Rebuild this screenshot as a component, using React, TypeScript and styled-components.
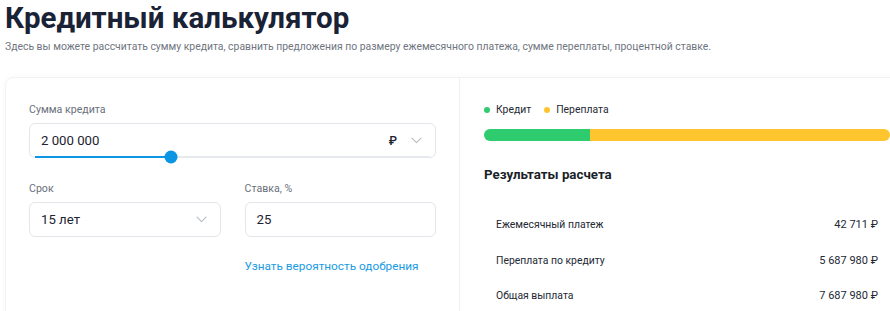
import styled, { createGlobalStyle } from 'styled-components'

const GlobalStyle = createGlobalStyle`
  html, body {
    margin: 0;
    padding: 0;
    background: #ffffff;
    overflow: hidden;
  }
  body {
    font-family: Roboto, 'Liberation Sans', sans-serif;
    color: #1f2430;
  }
`

const Chevron = () => (
  <svg width="11" height="7" viewBox="0 0 11 7" fill="none">
    <path d="M1 1.2L5.5 5.7L10 1.2" stroke="#b9bec6" strokeWidth="1.2" strokeLinecap="round" strokeLinejoin="round" />
  </svg>
)

const results = [
  { label: 'Ежемесячный платеж', value: '42 711 ₽' },
  { label: 'Переплата по кредиту', value: '5 687 980 ₽' },
  { label: 'Общая выплата', value: '7 687 980 ₽' },
]

const App = () => {
  const creditShare = 2000000 / 7687980

  return (
    <Page>
      <GlobalStyle />
      <Title>Кредитный калькулятор</Title>
      <Subtitle>
        Здесь вы можете рассчитать сумму кредита, сравнить предложения по размеру ежемесячного
        платежа, сумме переплаты, процентной ставке.
      </Subtitle>

      <Card>
        <Form>
          <Field>
            <Label>Сумма кредита</Label>
            <InputBox>
              <Value>2 000 000</Value>
              <Suffix>
                <Currency>₽</Currency>
                <Chevron />
              </Suffix>
              <Slider>
                <SliderFill style={{ width: '34.5%' }} />
                <Thumb style={{ left: '34.5%' }} />
              </Slider>
            </InputBox>
          </Field>

          <Row>
            <Field>
              <Label>Срок</Label>
              <InputBox>
                <Value>15 лет</Value>
                <Suffix>
                  <Chevron />
                </Suffix>
              </InputBox>
            </Field>
            <Field>
              <Label>Ставка, %</Label>
              <InputBox>
                <Value>25</Value>
              </InputBox>
              <Link>Узнать вероятность одобрения</Link>
            </Field>
          </Row>
        </Form>

        <Results>
          <Legend>
            <LegendItem>
              <Dot $color="#2ecb6f" />
              Кредит
            </LegendItem>
            <LegendItem>
              <Dot $color="#ffc52e" />
              Переплата
            </LegendItem>
          </Legend>
          <Bar>
            <BarPart $color="#2ecb6f" style={{ width: `${creditShare * 100}%` }} />
            <BarPart $color="#ffc52e" style={{ flex: 1 }} />
          </Bar>

          <ResultsTitle>Результаты расчета</ResultsTitle>

          <ResultList>
            {results.map((r) => (
              <ResultRow key={r.label}>
                <span>{r.label}</span>
                <ResultValue>{r.value}</ResultValue>
              </ResultRow>
            ))}
          </ResultList>
        </Results>
      </Card>
    </Page>
  )
}

const Page = styled.div`
  padding: 2px 0 0 5px;
  width: 920px;
`

const Title = styled.h1`
  margin: 0;
  font-size: 29.5px;
  line-height: 32px;
  font-weight: 700;
  color: #1a2236;
`

const Subtitle = styled.p`
  margin: 4px 0 0;
  font-size: 10.4px;
  line-height: 18px;
  color: #6f7580;
`

const Card = styled.div`
  margin-top: 21px;
  display: grid;
  grid-template-columns: 454px 454px;
  border: 1px solid #f1f2f4;
  border-radius: 8px;
  min-height: 260px;
  box-shadow: 0 0 6px rgba(20, 30, 50, 0.03);
`

const Form = styled.div`
  padding: 23px 23px 0 23px;
  border-right: 1px solid #eef0f2;
  display: flex;
  flex-direction: column;
  gap: 22px;
`

const Row = styled.div`
  display: grid;
  grid-template-columns: 1fr 1fr;
  gap: 24px;
`

const Field = styled.div`
  display: flex;
  flex-direction: column;
`

const Label = styled.div`
  font-size: 10.6px;
  line-height: 18px;
  color: #6a707c;
  margin-bottom: 4px;
`

const InputBox = styled.div`
  position: relative;
  height: 35px;
  box-sizing: border-box;
  border: 1px solid #e3e6ea;
  border-radius: 6px;
  display: flex;
  align-items: center;
  justify-content: space-between;
  padding: 0 13px 0 11px;
`

const Value = styled.span`
  font-size: 13.2px;
  color: #1d2330;
`

const Suffix = styled.span`
  display: flex;
  align-items: center;
  gap: 14px;
`

const Currency = styled.span`
  font-size: 12px;
  font-weight: 500;
  color: #1d2330;
`

const Slider = styled.div`
  position: absolute;
  left: 5px;
  right: 5px;
  bottom: -1px;
  height: 2px;
  background: #e6e9ed;
`

const SliderFill = styled.div`
  height: 100%;
  background: #0b95e3;
`

const Thumb = styled.div`
  position: absolute;
  top: 1px;
  width: 13px;
  height: 13px;
  border-radius: 50%;
  background: #0b95e3;
  transform: translate(-50%, -50%);
`

const Link = styled.a`
  margin-top: 21px;
  font-size: 11.8px;
  line-height: 16px;
  color: #1a9be3;
  cursor: pointer;
`

const Results = styled.div`
  padding: 23px 24px 0 24px;
  display: flex;
  flex-direction: column;
`

const Legend = styled.div`
  display: flex;
  gap: 13px;
  font-size: 10.4px;
  line-height: 18px;
  color: #232833;
`

const LegendItem = styled.span`
  display: flex;
  align-items: center;
  gap: 6px;
`

const Dot = styled.span<{ $color: string }>`
  width: 6px;
  height: 6px;
  border-radius: 50%;
  background: ${(p) => p.$color};
`

const Bar = styled.div`
  margin-top: 10px;
  display: flex;
  height: 12px;
  border-radius: 6px;
  overflow: hidden;
`

const BarPart = styled.div<{ $color: string }>`
  background: ${(p) => p.$color};
`

const ResultsTitle = styled.div`
  margin-top: 24px;
  font-size: 13.3px;
  line-height: 20px;
  font-weight: 700;
  color: #1a1f2a;
`

const ResultList = styled.div`
  margin-top: 22px;
  display: flex;
  flex-direction: column;
`

const ResultRow = styled.div`
  display: flex;
  justify-content: space-between;
  align-items: center;
  height: 35.5px;
  padding: 0 12px;
  font-size: 10.4px;
  color: #232833;
`

const ResultValue = styled.span`
  font-size: 11px;
`

export default App
